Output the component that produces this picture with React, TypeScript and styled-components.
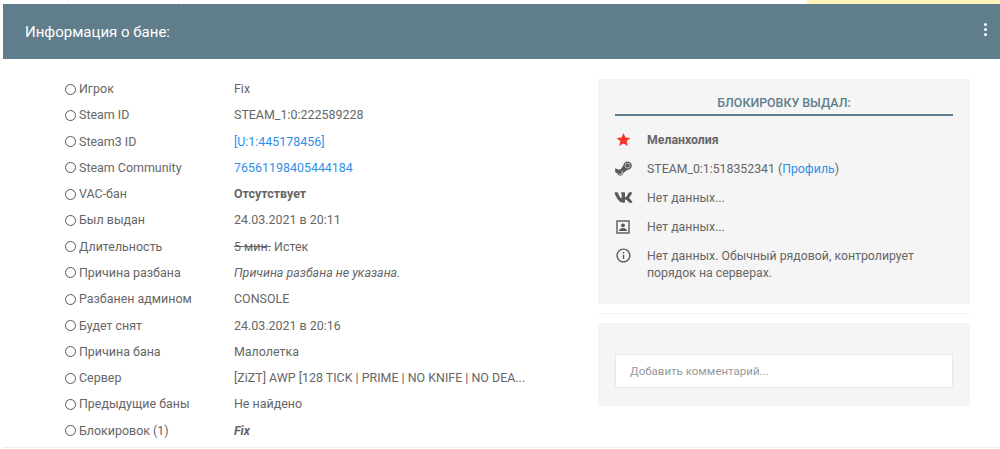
import React from "react";
import styled, { createGlobalStyle } from "styled-components";
import { FaSteamSymbol, FaVk } from "react-icons/fa";
import { MdOutlineInfo } from "react-icons/md";

const Global = createGlobalStyle`
  html, body { margin: 0; padding: 0; background: #fff; }
  body { font-family: Roboto, "Noto Sans", sans-serif; font-size: 12.45px; color: #666; overflow: hidden; }
`;

const Page = styled.div`
  width: 1000px; height: 449px; display: flex; flex-direction: column; overflow: hidden;
`;
const TopStrip = styled.div`
  height: 4px; display: flex; flex: none;
`;
const TopCell = styled.div<{ $w: number }>`
  width: ${(p) => p.$w}px; flex: none; border-right: 1px solid #f1f1f1; box-sizing: border-box;
`;
const Highlight = styled.div`
  width: 193px; margin-left: auto; background: #fdf5b5;
`;
const Card = styled.section`
  margin-left: 3px; flex: 1; display: flex; flex-direction: column; border-bottom: 1px solid #eeeeee; margin-bottom: 1px;
`;
const Header = styled.header`
  height: 55px; flex: none; background: #607d8b; color: #fff; display: flex; align-items: center;
  justify-content: space-between; padding: 0 13px 0 22px;
`;
const Title = styled.h2`
  margin: 0; font-size: 15px; font-weight: 400; color: #fff;
`;
const Dots = styled.div`
  display: flex; flex-direction: column; gap: 2px; margin-top: -4px;
  i { display: block; width: 3px; height: 3px; border-radius: 50%; background: #fff; }
`;
const Body = styled.div`
  display: flex; flex: 1; padding: 20px 30px 0 62px; justify-content: space-between; min-height: 0;
`;
const List = styled.div`
  width: 470px; display: flex; flex-direction: column; margin-top: -3px;
`;
const Row = styled.div`
  height: 26.27px; display: grid; grid-template-columns: 169px 1fr; align-items: center; line-height: 16px;
`;
const Label = styled.div`
  display: flex; align-items: center; gap: 3px;
`;
const Ring = styled.span`
  width: 11px; height: 11px; border: 1.3px solid #555; border-radius: 50%; box-sizing: border-box; flex: none;
`;
const Value = styled.div<{ $kind?: "bold" | "italic" | "boldItalic" }>`
  white-space: nowrap;
  font-weight: ${(p) => (p.$kind === "bold" || p.$kind === "boldItalic" ? 700 : 400)};
  font-style: ${(p) => (p.$kind === "italic" || p.$kind === "boldItalic" ? "italic" : "normal")};
`;
const Link = styled.a`
  color: #2f8fe8; text-decoration: none;
`;
const Strike = styled.span`
  text-decoration: line-through;
`;
const Side = styled.aside`
  width: 372px; display: flex; flex-direction: column; font-size: 12.3px;
`;
const Panel = styled.div`
  background: #f5f5f5; padding: 0 17px;
`;
const InfoPanel = styled(Panel)`
  height: 225px; padding-top: 16px; box-sizing: border-box;
`;
const PanelTitle = styled.h3`
  margin: 0 0 9px; height: 21px; box-sizing: border-box; line-height: 16px; text-align: center;
  font-size: 12.4px; font-weight: 500; color: #607d8b; border-bottom: 2px solid #607d8b;
`;
const Item = styled.div`
  display: grid; grid-template-columns: 32px 1fr; min-height: 29px; align-items: start; padding-top: 7px; box-sizing: border-box;
  line-height: 17px;
`;
const IconSlot = styled.div`
  width: 18px; height: 17px; display: flex; align-items: center; justify-content: center; margin: -1px 0 0 -1px;
  svg { display: block; flex: none; }
`;
const Strong = styled.strong`
  font-weight: 700;
`;
const Divider = styled.hr`
  margin: 9px 0 9px; border: 0; height: 1px; background: #f1f1f1;
`;
const CommentPanel = styled(Panel)`
  height: 83px; padding-top: 31px; box-sizing: border-box;
`;
const Input = styled.input`
  width: 100%; height: 34px; box-sizing: border-box; border: 1px solid #e8e8e8; background: #fff; padding: 0 14px;
  font: 11.5px Roboto, sans-serif; color: #666; outline: none;
  &::placeholder { color: #999; opacity: 1; }
`;

const StarIcon = () => (
  <svg width="15" height="15" viewBox="0 0 24 24" fill="#f9352b">
    <path d="M12 1.5l3.1 7.4 8 .6-6.1 5.2 1.9 7.8L12 18.3l-6.9 4.2 1.9-7.8L.9 9.5l8-.6z" />
  </svg>
);
const CardIcon = () => (
  <svg width="14" height="14" viewBox="0 0 14 14">
    <rect x="1" y="1" width="12" height="12" fill="none" stroke="#5a5a5a" strokeWidth="1.4" />
    <circle cx="7" cy="5.3" r="1.9" fill="#5a5a5a" />
    <path d="M3 11c.2-2 2-3 4-3s3.800 1 4 3z" fill="#5a5a5a" />
  </svg>
);

const rows: [string, React.ReactNode, ("bold" | "italic" | "boldItalic")?][] = [
  ["Игрок", "Fix"],
  ["Steam ID", "STEAM_1:0:222589228"],
  ["Steam3 ID", <Link href="#">[U:1:445178456]</Link>],
  ["Steam Community", <Link href="#">76561198405444184</Link>],
  ["VAC-бан", "Отсутствует", "bold"],
  ["Был выдан", "24.03.2021 в 20:11"],
  ["Длительность", <><Strike>5 мин.</Strike> Истек</>],
  ["Причина разбана", "Причина разбана не указана.", "italic"],
  ["Разбанен админом", "CONSOLE"],
  ["Будет снят", "24.03.2021 в 20:16"],
  ["Причина бана", "Малолетка"],
  ["Сервер", "[ZiZT] AWP [128 TICK | PRIME | NO KNIFE | NO DEA..."],
  ["Предыдущие баны", "Не найдено"],
  ["Блокировок (1)", "Fix", "boldItalic"],
];

export default function App() {
  return (
    <Page>
      <Global />
      <TopStrip>
        <TopCell $w={69} />
        <TopCell $w={110} />
        <Highlight />
      </TopStrip>
      <Card>
        <Header>
          <Title>Информация о бане:</Title>
          <Dots><i /><i /><i /></Dots>
        </Header>
        <Body>
          <List>
            {rows.map(([l, v, k]) => (
              <Row key={l}>
                <Label><Ring />{l}</Label>
                <Value $kind={k}>{v}</Value>
              </Row>
            ))}
          </List>
          <Side>
            <InfoPanel>
              <PanelTitle>БЛОКИРОВКУ ВЫДАЛ:</PanelTitle>
              <Item><IconSlot><StarIcon /></IconSlot><Strong>Меланхолия</Strong></Item>
              <Item><IconSlot><FaSteamSymbol size={19} color="#5a5a5a" /></IconSlot><span>STEAM_0:1:518352341 (<Link href="#">Профиль</Link>)</span></Item>
              <Item><IconSlot><FaVk size={19} color="#5a5a5a" /></IconSlot><span>Нет данных...</span></Item>
              <Item><IconSlot><CardIcon /></IconSlot><span>Нет данных...</span></Item>
              <Item><IconSlot><MdOutlineInfo size={17} color="#5a5a5a" /></IconSlot><span>Нет данных. Обычный рядовой, контролирует порядок на серверах.</span></Item>
            </InfoPanel>
            <Divider />
            <CommentPanel><Input placeholder="Добавить комментарий..." /></CommentPanel>
          </Side>
        </Body>
      </Card>
    </Page>
  );
}
